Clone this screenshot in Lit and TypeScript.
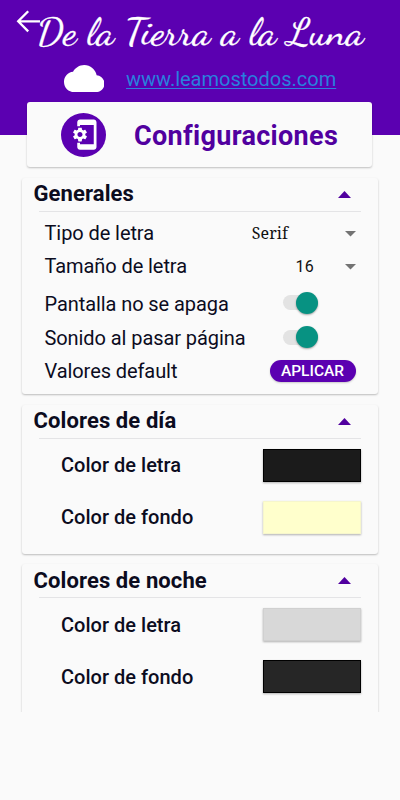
import { LitElement, html, css, svg } from "lit";
import { customElement } from "lit/decorators.js";
import { styleMap } from "lit/directives/style-map.js";

interface Swatch { label: string; color: string; border: string; }

const GEAR_PHONE = svg`<path d="M11.82 12.49c.02-.16.04-.32.04-.49 0-.17-.02-.33-.04-.49l1.08-.82c.1-.07.12-.21.06-.32l-1.03-1.73c-.06-.11-.2-.15-.31-.11l-1.28.5c-.27-.2-.56-.36-.87-.49l-.2-1.33c0-.12-.11-.21-.24-.21H6.98c-.13 0-.24.09-.26.21l-.2 1.32c-.31.12-.6.3-.87.49l-1.28-.5c-.12-.05-.25 0-.31.11l-1.03 1.73c-.06.12-.03.25.07.33l1.08.82c-.02.16-.03.33-.03.49 0 .17.02.33.04.49l-1.09.83c-.1.07-.12.21-.06.32l1.03 1.73c.06.11.2.15.31.11l1.28-.5c.27.2.56.36.87.49l.2 1.32c.01.12.12.21.25.21h2.06c.13 0 .24-.09.25-.21l.2-1.32c.31-.12.6-.3.87-.49l1.28.5c.12.05.25 0 .31-.11l1.03-1.73c.06-.11.04-.24-.06-.32l-1.1-.83zM7.98 13.83c-1.02 0-1.85-.82-1.85-1.83s.83-1.83 1.85-1.83 1.85.82 1.85 1.83-.83 1.83-1.85 1.83zM18 1.01L8 1c-1.1 0-2 .9-2 2v3h2V5h10v14H8v-1H6v3c0 1.1.9 2 2 2h10c1.1 0 2-.9 2-2V3c0-1.1-.9-1.99-2-1.99z"/>`;

@customElement("app-root")
export class AppRoot extends LitElement {
  static styles = css`
    :host {
      display: block;
      height: 800px;
      overflow: hidden;
      background: #fafafa;
      color: #0c0c1e;
      font-family: Roboto, "Liberation Sans", sans-serif;
    }
    * { box-sizing: border-box; }
    svg { display: block; flex: none; }
    .hero { height: 134.5px; background: #5b00b1; }
    .title { display: flex; height: 56px; padding-left: 16px; }
    .arrow { margin-top: 10px; fill: none; stroke: #fff; stroke-width: 2.3; }
    .name { margin-left: -4px; fill: #fff; stroke: #fff; stroke-width: 0.3; font-family: "Dancing Script", cursive; font-size: 36px; }
    .site { display: flex; padding: 9px 0 0 63.5px; }
    .cloud { fill: #fff; }
    .link { margin-left: 22px; font-size: 20px; line-height: 29px; letter-spacing: 0; color: #2a7fdd; text-decoration: underline; text-decoration-thickness: 1px; text-underline-offset: 2px; text-decoration-skip-ink: none; }
    .heading {
      display: flex; align-items: center;
      position: relative;
      width: 345px; height: 65px;
      margin: -32.5px 0 0 27px;
      padding-left: 34px;
      border-radius: 3px;
      background: #fafafa;
      box-shadow: 0 1px 2px rgba(0, 0, 0, 0.24);
      color: #51009f;
    }
    .disc { display: flex; align-items: center; justify-content: center; width: 45px; height: 44px; padding-left: 3px; border-radius: 50%; background: #5b00b1; fill: #fff; }
    .heading h1 { margin: 3px 0 0 28px; font-size: 27px; font-weight: 700; line-height: 32px; letter-spacing: 0.32px; }
    .card { width: 356px; margin: 10.5px 0 0 22px; border-radius: 3px; background: #fafafa; box-shadow: 0 1px 2px rgba(0, 0, 0, 0.25); }
    .general { height: 216.5px; }
    .day { height: 149px; }
    .clip { height: 158.5px; overflow: hidden; }
    .night { height: 170px; }
    .bar { display: flex; align-items: center; justify-content: space-between; height: 34px; margin: 0 17px; padding: 0 10px 0 0; border-bottom: 1px solid; border-image: linear-gradient(90deg, #e4e4e6, #e4e4e6) 1; }
    .bar h2 { margin: 0 0 0 -5.5px; font-size: 22px; font-weight: 700; line-height: 26px; letter-spacing: 0.1px; }
    .up { fill: #51009f; }
    .down { fill: #737373; }
    .rows { display: grid; grid-template-rows: 33px 33px 42px 27px 39px; padding: 5px 17px 0 22.5px; }
    .row { display: flex; align-items: center; justify-content: space-between; font-size: 20px; letter-spacing: -0.08px; }
    .select { display: flex; align-items: center; gap: 31px; padding-right: 5px; font-size: 16px; color: #111; letter-spacing: 0.3px; }
    .serif { gap: 57px; font-family: "Noto Serif", "Droid Serif", "DejaVu Serif Condensed", "DejaVu Serif", serif; letter-spacing: 0.1px; }
    .select svg { margin-top: 2px; }
    .switch { display: flex; justify-content: flex-end; align-items: center; width: 35px; height: 15px; margin: -2px 43px 0 0; border-radius: 8px; background: #e3e3e3; }
    .thumb { flex: none; width: 22px; height: 22px; border-radius: 50%; background: #079282; box-shadow: 0 1px 2px rgba(0, 0, 0, 0.35); }
    .apply { width: 86px; height: 22px; margin: -1px 5.5px 0 0; padding: 0; border: 0; border-radius: 11px; background: #5b00b1; color: #fff; font: 500 15.5px/23px Roboto, sans-serif; box-shadow: 0 1px 2px rgba(0, 0, 0, 0.2); }
    .colors { display: grid; grid-template-rows: 52px 52px; padding: 0.6px 17px 0 39px; }
    .colors .row { font-weight: 500; letter-spacing: 0.02px; }
    .swatch { width: 98px; height: 33px; border: 1px solid; box-shadow: 0 1px 2px rgba(0, 0, 0, 0.3); }
  `;

  private bar(title: string) {
    return html`<header class="bar"><h2>${title}</h2>
      <svg class="up" width="13" height="7" viewBox="0 0 13 7"><path d="M0 7 6.5 0 13 7z" /></svg></header>`;
  }

  private caret() {
    return html`<svg class="down" width="11" height="6" viewBox="0 0 11 6"><path d="M0 0H11L5.5 5.5z" /></svg>`;
  }

  private colors(items: Swatch[]) {
    return html`<div class="colors">${items.map(
      (s) => html`<div class="row"><span>${s.label}</span>
        <div class="swatch" style=${styleMap({ backgroundColor: s.color, borderColor: s.border })}></div></div>`
    )}</div>`;
  }

  render() {
    return html`
      <div class="hero">
        <div class="title">
          <svg class="arrow" width="25" height="23" viewBox="0 0 25 23"><path d="M12.2 1.2 2.2 11.3 12.2 21.4M2.2 11.3H24" /></svg>
          <svg class="name" width="340" height="56"><text x="0" y="43.5" textLength="327" lengthAdjust="spacingAndGlyphs">De la Tierra a la Luna</text></svg>
        </div>
        <div class="site">
          <svg class="cloud" width="40.5" height="27" viewBox="0 4 24 16"><path d="M19.35 10.04C18.67 6.59 15.64 4 12 4 9.11 4 6.6 5.64 5.35 8.04 2.34 8.36 0 10.91 0 14c0 3.31 2.69 6 6 6h13c2.76 0 5-2.24 5-5 0-2.64-2.05-4.78-4.65-4.96z" /></svg>
          <span class="link">www.leamostodos.com</span>
        </div>
      </div>
      <div class="heading">
        <div class="disc"><svg width="33" height="33" viewBox="0 0 24 24">${GEAR_PHONE}</svg></div>
        <h1>Configuraciones</h1>
      </div>
      <section class="card general">
        ${this.bar("Generales")}
        <div class="rows">
          <div class="row"><span>Tipo de letra</span><div class="select serif">Serif ${this.caret()}</div></div>
          <div class="row"><span>Tamaño de letra</span><div class="select">16 ${this.caret()}</div></div>
          <div class="row"><span>Pantalla no se apaga</span><div class="switch"><div class="thumb"></div></div></div>
          <div class="row"><span>Sonido al pasar página</span><div class="switch"><div class="thumb"></div></div></div>
          <div class="row"><span>Valores default</span><button class="apply">APLICAR</button></div>
        </div>
      </section>
      <section class="card day">
        ${this.bar("Colores de día")}
        ${this.colors([
          { label: "Color de letra", color: "#1b1b1b", border: "#000" },
          { label: "Color de fondo", color: "#ffffcc", border: "#f6f6cc" },
        ])}
      </section>
      <div class="clip">
        <section class="card night">
          ${this.bar("Colores de noche")}
          ${this.colors([
            { label: "Color de letra", color: "#d8d8d8", border: "#d0d0d0" },
            { label: "Color de fondo", color: "#262626", border: "#000" },
          ])}
        </section>
      </div>
    `;
  }
}
